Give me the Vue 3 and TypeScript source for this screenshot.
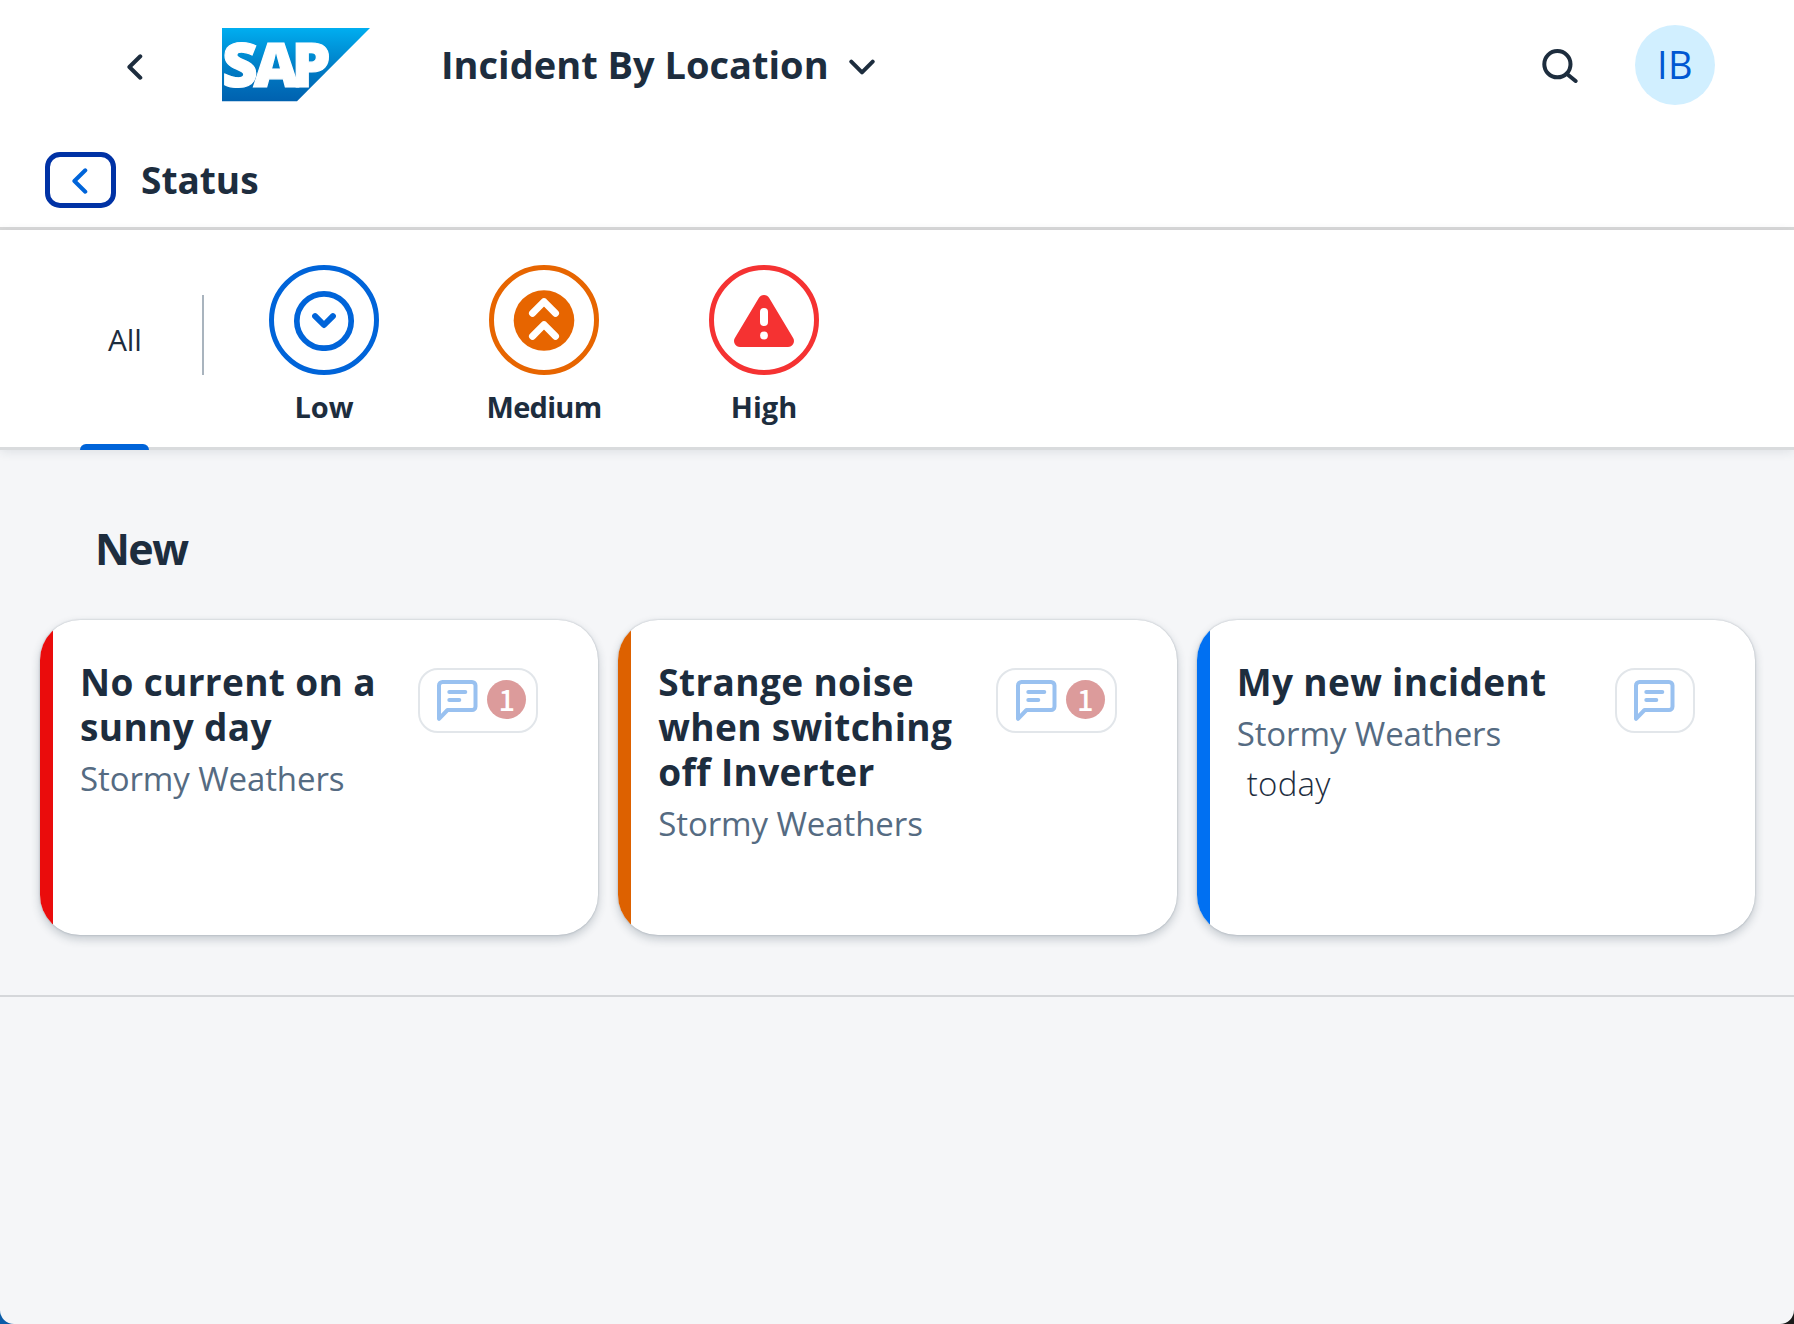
<script setup lang="ts">
interface Incident {
  id: number
  lines: string[]
  contact: string
  due?: string
  comments: number
  color: string
}

const filters = [
  { key: 'low', label: 'Low' },
  { key: 'medium', label: 'Medium' },
  { key: 'high', label: 'High' },
]

const incidents: Incident[] = [
  { id: 1, lines: ['No current on a', 'sunny day'], contact: 'Stormy Weathers', comments: 1, color: '#ea0c0c' },
  { id: 2, lines: ['Strange noise', 'when switching', 'off Inverter'], contact: 'Stormy Weathers', comments: 1, color: '#dd6100' },
  { id: 3, lines: ['My new incident'], contact: 'Stormy Weathers', due: 'today', comments: 0, color: '#0070f2' },
]
</script>

<template>
  <div class="page">
    <header class="shell">
      <svg class="shell-back" width="16" height="26" viewBox="0 0 16 26"><path d="M13.3 2.3 2.4 13 13.3 23.7" /></svg>
      <svg class="logo" width="148" height="74" viewBox="0 0 148 74">
        <defs>
          <linearGradient id="sapBlue" x1="0" y1="0" x2="0" y2="1">
            <stop offset="0" stop-color="#00aef0" />
            <stop offset="0.25" stop-color="#0097dc" />
            <stop offset="0.55" stop-color="#007cc5" />
            <stop offset="1" stop-color="#0061af" />
          </linearGradient>
        </defs>
        <path d="M0 0H148L75 73.3H0Z" fill="url(#sapBlue)" />
        <text class="logo-text" x="0 31.5 69.5" y="58.8">SAP</text>
      </svg>
      <h1 class="shell-title">Incident By Location</h1>
      <svg class="shell-arrow" width="26" height="16" viewBox="0 0 26 16"><path d="M2.3 2.6 13 13.3 23.7 2.6" /></svg>
      <svg class="search" width="36" height="34" viewBox="0 0 36 34">
        <circle cx="15.4" cy="15.2" r="13.1" /><path d="M25 25 33.6 32" />
      </svg>
      <div class="avatar"><span>IB</span></div>
    </header>

    <div class="subheader">
      <button class="back-button">
        <svg width="16" height="26" viewBox="0 0 16 26"><path d="M13.3 2.3 2.4 13 13.3 23.7" /></svg>
      </button>
      <h2 class="status">Status</h2>
    </div>

    <nav class="tabs">
      <div class="tab-all"><span>All</span><i class="indicator" /></div>
      <div class="divider" />
      <div v-for="f in filters" :key="f.key" class="tab" :class="f.key">
        <div class="ring">
          <svg v-if="f.key === 'low'" width="62" height="62" viewBox="0 0 62 62">
            <circle cx="31" cy="32" r="27.2" fill="none" stroke="currentColor" stroke-width="5.7" />
            <path d="M22.1 27.1 31 36 39.9 27.1" fill="none" stroke="currentColor" stroke-width="6" stroke-linecap="round" stroke-linejoin="round" />
          </svg>
          <svg v-else-if="f.key === 'medium'" width="62" height="62" viewBox="0 0 62 62">
            <circle cx="31" cy="31.5" r="30.3" fill="currentColor" />
            <path d="M19.5 24.2 31 12.6 42.5 24.2M19.5 47.2 31 35.6 42.5 47.2" fill="none" stroke="#fff" stroke-width="7" stroke-linecap="round" stroke-linejoin="round" />
          </svg>
          <svg v-else width="62" height="62" viewBox="0 0 62 62">
            <path d="M25.8 9a6 6 0 0 1 10.4 0L60 48.8a6 6 0 0 1-5.2 9.2H7.2A6 6 0 0 1 2 48.8Z" fill="currentColor" />
            <rect x="27" y="19" width="8" height="18" rx="4" fill="#fff" />
            <circle cx="31" cy="46.5" r="3.9" fill="#fff" />
          </svg>
        </div>
        <span class="tab-label">{{ f.label }}</span>
      </div>
    </nav>

    <main class="content">
      <h3 class="group">New</h3>
      <div class="cards">
        <article v-for="c in incidents" :key="c.id" class="card">
          <div class="stripe" :style="{ background: c.color }" />
          <div class="info">
            <div class="card-title"><div v-for="l in c.lines" :key="l">{{ l }}</div></div>
            <div class="contact">{{ c.contact }}</div>
            <div v-if="c.due" class="due">{{ c.due }}</div>
          </div>
          <div class="pill">
            <svg width="41" height="41" viewBox="0 0 41 41">
              <path d="M2 38.8V5.5A3.5 3.5 0 0 1 5.5 2H35A3.5 3.5 0 0 1 38.5 5.5V26.5A3.5 3.5 0 0 1 35 30H10.5Z" />
              <path d="M12.3 12H28.3M12.3 20H22.3" />
            </svg>
            <span v-if="c.comments" class="badge">{{ c.comments }}</span>
          </div>
        </article>
      </div>
    </main>
  </div>
</template>

<style>
html {
  background: linear-gradient(90deg, #0a5ca8 0 50%, #1a1a1a 50%);
}
</style>

<style scoped>
.page {
  box-sizing: border-box;
  width: 1794px;
  height: 1324px;
  overflow: hidden;
  background: #f5f6f8;
  border-radius: 0 0 14px 14px;
  font-family: "Open Sans", "Noto Sans", sans-serif;
  color: #1d2d3e;
}
h1, h2, h3 { margin: 0; font-weight: 700; white-space: nowrap; }
svg { display: block; flex: none; }
.shell { display: flex; align-items: center; height: 130px; background: #fff; }
.shell-back, .shell-arrow, .search, .back-button svg {
  fill: none; stroke: #1d2d3e; stroke-width: 4; stroke-linecap: round; stroke-linejoin: round;
}
.shell-back { margin: 3px 0 0 127px; }
.logo { margin-left: 79px; }
.logo-text { fill: #fff; stroke: #fff; stroke-width: 1.2; font-weight: 800; font-size: 62px; }
.shell-title { margin: -2px 0 0 71px; width: 388px; font-size: 38px; line-height: 130px; }
.shell-arrow { margin: 3px 0 0 20px; }
.search { margin: 2px 0 0 auto; }
.avatar {
  width: 80px; height: 80px; margin: 0 79px 0 57px; border-radius: 50%;
  background: #d1efff; color: #0057d2; text-align: center; font-size: 38px; line-height: 79px; letter-spacing: 0.5px;
}
.subheader {
  display: flex; align-items: center; box-sizing: border-box; height: 100px;
  padding: 3px 0 0 45px; background: #fff; border-bottom: 3px solid #d9d9d9;
}
.back-button {
  display: flex; align-items: center; box-sizing: border-box; width: 71px; height: 56px; padding: 0 0 0 22px;
  border: 5px solid #0032a5; border-radius: 15px; background: #fff;
}
.back-button svg { stroke: #0064d9; margin-top: 1px; }
.status { margin-left: 25px; font-size: 37px; line-height: 56px; }
.tabs {
  position: relative; display: flex; box-sizing: border-box; height: 220px; padding-left: 80px;
  background: #fff; border-bottom: 3px solid #d9dbdd; box-shadow: 0 2px 10px rgba(34, 53, 72, 0.11);
}
.tab-all {
  position: relative; width: 69px; padding: 90px 0 0 28px; box-sizing: border-box;
  font-weight: 400; font-size: 30px; line-height: 40px; letter-spacing: -0.2px;
}
.indicator { position: absolute; left: 0; bottom: -3px; width: 69px; height: 6px; border-radius: 6px 6px 0 0; background: #0064d9; }
.divider { width: 2px; height: 80px; margin: 65px 10px 0 53px; background: #a9b4be; }
.tab { display: flex; flex-direction: column; align-items: center; width: 220px; padding-top: 35px; }
.ring {
  display: flex; align-items: center; justify-content: center; box-sizing: border-box;
  width: 110px; height: 110px; border: 5px solid currentColor; border-radius: 50%;
}
.low { color: #0064d9; }
.medium { color: #e76500; }
.high { color: #f53232; }
.tab-label { margin-top: 12px; font-weight: 700; font-size: 29px; line-height: 40px; color: #1d2d3e; }
.medium .tab-label { letter-spacing: -0.7px; }
.content { box-sizing: border-box; height: 547px; border-bottom: 2px solid #d5d7da; }
.group { padding: 69px 0 0 95px; font-size: 43px; line-height: 60px; letter-spacing: -1.6px; }
.cards { display: flex; gap: 20px; padding: 41px 39px 0 40px; }
.card {
  display: flex; align-items: flex-start; flex: 1; min-width: 0; box-sizing: border-box; height: 315px; border-radius: 40px; background: #fff;
  overflow: hidden; box-shadow: 0 0 2px rgba(34, 53, 72, 0.3), 0 4px 10px rgba(34, 53, 72, 0.24);
}
.stripe { flex: none; width: 13px; height: 315px; }
.info { flex: 1; min-width: 0; padding: 39px 0 0 27px; white-space: nowrap; }
.card-title { font-weight: 700; font-size: 37px; line-height: 45px; letter-spacing: 0.35px; }
.contact { margin-top: 5px; font-size: 33px; line-height: 50px; color: #556b82; letter-spacing: -0.1px; }
.due { padding-left: 10px; font-weight: 300; font-size: 33px; line-height: 50px; letter-spacing: 0.3px; }
.pill {
  display: flex; align-items: flex-start; flex: none; box-sizing: border-box; height: 65px; margin: 48px 60px 0 0;
  padding: 10px 17.5px 0; border: 2px solid #e2e6ea; border-radius: 20px;
}
.pill:has(.badge) { padding-right: 10px; }
.pill svg { fill: none; stroke: #99c1f0; stroke-width: 4; stroke-linecap: round; stroke-linejoin: round; }
.badge {
  width: 39px; height: 39px; margin-left: 9px; border-radius: 50%; background: #dc9b9b; color: #fff;
  text-align: center; font-family: "Noto Sans CJK SC", sans-serif; font-weight: 500; font-size: 29px; line-height: 36px;
}
</style>
